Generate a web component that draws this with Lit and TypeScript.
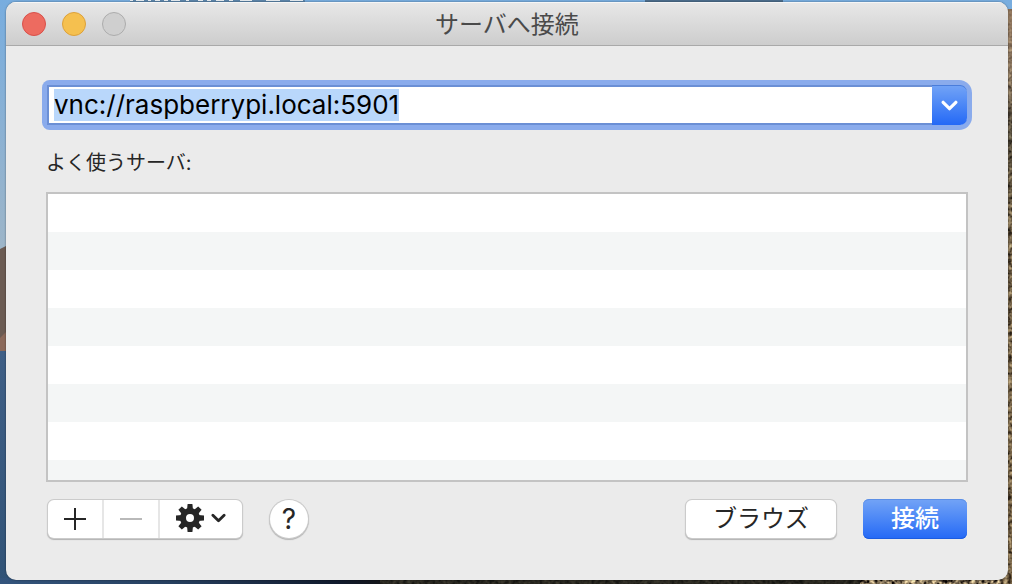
import { LitElement, html, css, svg } from "lit";
import { customElement, state, query } from "lit/decorators.js";

@customElement("app-root")
export class AppRoot extends LitElement {
  static styles = css`
    :host {
      display: block;
      color: #262626;
      font-family: "Inter", "Noto Sans CJK JP", sans-serif;
    }
    * {
      box-sizing: border-box;
    }
    button,
    input {
      font: inherit;
      color: inherit;
      margin: 0;
      padding: 0;
      border: 0;
      outline: 0;
      background: none;
    }
    svg {
      display: block;
    }
    .desktop {
      position: relative;
      display: flex;
      min-height: 100vh;
      padding: 2px 4px 4px 6px;
      overflow: hidden;
    }
    .wallpaper {
      position: absolute;
      inset: 0;
      width: 100%;
      height: 100%;
    }
    .window {
      position: relative;
      flex: 1;
      display: flex;
      flex-direction: column;
      border-radius: 10px;
      overflow: hidden;
      background: #ebebeb;
      box-shadow: 0 0 2px rgba(0, 0, 0, 0.5);
    }
    .titlebar {
      display: grid;
      grid-template-columns: 1fr auto 1fr;
      align-items: center;
      height: 44px;
      padding: 0 16px;
      border-bottom: 1px solid #a9a9a9;
      background: linear-gradient(#e8e8e8, #cdcdcd);
      box-shadow: inset 0 1px #f6f6f6;
    }
    .lights {
      display: flex;
      gap: 16px;
    }
    .light {
      width: 24px;
      height: 24px;
      border-radius: 50%;
      border: 1px solid;
    }
    .close {
      background: #ed6b60;
      border-color: #d8504a;
    }
    .minimize {
      background: #f5c04f;
      border-color: #dca03a;
    }
    .zoom {
      background: #cfcfcf;
      border-color: #acacac;
    }
    .title {
      margin: 0;
      padding-top: 2px;
      font-size: 24px;
      line-height: 32px;
      font-weight: 400;
      color: #4a4a4a;
    }
    .content {
      flex: 1;
      display: flex;
      flex-direction: column;
      padding: 39px 40px 41px;
    }
    .combo {
      display: flex;
      height: 40px;
      margin: 0 1px;
      border-radius: 3px 8px 8px 3px;
      background: #fff;
      box-shadow: 0 0 0 5px #8aabec;
    }
    .address {
      flex: 1;
      min-width: 0;
      padding: 0 5px;
      border: 2px solid #6b8fd5;
      border-right: 0;
      font-size: 26px;
      line-height: 32px;
      color: #000;
    }
    .address::selection {
      background: #b9d7fb;
      color: #000;
    }
    .drop {
      display: grid;
      place-items: center;
      width: 35px;
      border-radius: 0 7px 7px 0;
      color: #fff;
      background: linear-gradient(#73a4f6, #2469f6);
      box-shadow: inset 0 1px #4a7ddb;
    }
    .label {
      margin: 0;
      padding: 22px 0 13px;
      font-size: 20px;
      line-height: 32px;
      font-weight: 400;
    }
    .servers {
      flex: 1;
      margin: 0;
      padding: 0;
      list-style: none;
      border: 2px solid #c3c3c3;
      background: repeating-linear-gradient(#fff 0 38px, #f4f6f6 38px 76px);
    }
    .actions {
      display: flex;
      align-items: center;
      padding: 17px 1px 0 2px;
    }
    .raised {
      height: 38px;
      border-radius: 6px;
      background: #fff;
      box-shadow: 0 0 0 1px #cbcbcb, 0 1px 1px 1px #b2b2b2;
    }
    .segments {
      display: flex;
      margin-right: 28px;
    }
    .segment {
      display: flex;
      align-items: center;
      justify-content: center;
      gap: 7px;
      width: 56px;
      border-right: 2px solid #e6e6e6;
    }
    .segment:last-child {
      width: 82px;
      padding-bottom: 2px;
      border-right: 0;
    }
    .segment:disabled {
      color: #b9b9b9;
    }
    .help.raised {
      width: 38px;
      border-radius: 50%;
      font-size: 28px;
      line-height: 38px;
    }
    .spacer {
      flex: 1;
    }
    .push {
      width: 150px;
      font-size: 24px;
      line-height: 36px;
    }
    .connect {
      width: 104px;
      height: 40px;
      margin-left: 27px;
      border-radius: 6px;
      font-size: 24px;
      line-height: 36px;
      font-weight: 500;
      color: #fff;
      background: linear-gradient(#73a4f6, #2469f6);
      box-shadow: inset 0 1px #5c8fe6, inset 0 -1px #1c5ce0;
    }
  `;

  @state() private address = "vnc://raspberrypi.local:5901";
  @query(".address") private field!: HTMLInputElement;

  firstUpdated() {
    this.field.focus();
    this.field.select();
  }

  private chevron(w: number, h: number) {
    return html`<svg width=${w} height=${h} viewBox="0 0 16 10" aria-hidden="true">
      <path d="M2 2l6 6 6-6" fill="none" stroke="currentColor" stroke-width="3" stroke-linecap="round" stroke-linejoin="round" />
    </svg>`;
  }

  private gear() {
    const teeth = [0, 45, 90, 135, 180, 225, 270, 315];
    return html`<svg width="28" height="28" viewBox="-14 -14 28 28" fill="currentColor" aria-hidden="true">
      <circle r="7" fill="none" stroke="currentColor" stroke-width="6" />
      ${teeth.map((a) => svg`<path d="M-3 -8L-2.4 -14H2.4L3 -8Z" transform="rotate(${a})" />`)}
    </svg>`;
  }

  private wallpaper() {
    return html`<svg class="wallpaper" viewBox="0 0 1012 584" preserveAspectRatio="none" aria-hidden="true">
      <defs>
        <linearGradient id="sky" x2="0" y2="1">
          <stop offset="0" stop-color="#78addf" />
          <stop offset="1" stop-color="#9db5c8" />
        </linearGradient>
        <linearGradient id="sea" x2="0" y2="1">
          <stop offset="0" stop-color="#3f5f86" />
          <stop offset="1" stop-color="#315377" />
        </linearGradient>
        <linearGradient id="shore">
          <stop offset="0" stop-color="#34557d" />
          <stop offset="0.45" stop-color="#263f5f" />
          <stop offset="0.9" stop-color="#10192b" />
          <stop offset="1" stop-color="#14161a" />
        </linearGradient>
        <linearGradient id="cliff" x2="0" y2="1">
          <stop offset="0" stop-color="#92765d" stop-opacity="0.85" />
          <stop offset="0.1" stop-color="#8b7460" stop-opacity="0.6" />
          <stop offset="0.22" stop-color="#2c2a22" stop-opacity="0.6" />
          <stop offset="0.4" stop-color="#5a4a32" stop-opacity="0.4" />
          <stop offset="1" stop-color="#6b5434" stop-opacity="0.4" />
        </linearGradient>
        <filter id="grain" x="0" y="0" width="1" height="1" color-interpolation-filters="sRGB">
          <feTurbulence type="fractalNoise" baseFrequency="0.25" numOctaves="3" seed="4" />
          <feColorMatrix values="1.8 0 0 0 -0.38  1.65 0 0 0 -0.37  1.3 0 0 0 -0.3  0 0 0 0 1" />
        </filter>
      </defs>
      <rect width="1012" height="250" fill="url(#sky)" />
      <path d="M0 249L6 246V352H0Z" fill="#6b5b53" />
      <path d="M0 338L6 332V352H0Z" fill="#8b695a" />
      <rect y="351" width="20" height="233" fill="url(#sea)" />
      <rect y="578" width="380" height="6" fill="url(#shore)" />
      <rect x="380" y="578" width="632" height="6" filter="url(#grain)" />
      <rect x="380" y="578" width="480" height="6" fill="#171915" opacity="0.85" />
      <rect x="1002" y="9" width="10" height="575" filter="url(#grain)" />
      <rect x="1002" y="9" width="10" height="575" fill="url(#cliff)" />
      <rect x="645" width="138" height="2" fill="#4d6e8c" />
      <rect x="130" width="175" height="2" fill="#5d86ab" />
      <path d="M130 0h3v1h-3zM136 0h8v1h-8zM148 0h3v1h-3zM155 0h5v1h-5zM164 0h4v1h-4zM171 0h9v1h-9zM186 0h3v1h-3zM198 0h5v1h-5zM207 0h4v1h-4zM216 0h8v1h-8zM229 0h4v1h-4zM240 0h12v1h-12zM266 0h14v1h-14zM290 0h13v1h-13z" fill="#e8eef2" />
    </svg>`;
  }

  render() {
    return html`<div class="desktop">
      ${this.wallpaper()}
      <main class="window">
        <header class="titlebar">
          <div class="lights">
            <button class="light close" aria-label="閉じる"></button>
            <button class="light minimize" aria-label="しまう"></button>
            <button class="light zoom" aria-label="拡大" disabled></button>
          </div>
          <h1 class="title">サーバへ接続</h1>
        </header>
        <div class="content">
          <div class="combo">
            <input class="address" type="text" aria-label="サーバアドレス" spellcheck="false" .value=${this.address}
              @input=${(e: InputEvent) => (this.address = (e.target as HTMLInputElement).value)} />
            <button class="drop" aria-label="履歴">${this.chevron(17, 11)}</button>
          </div>
          <h2 class="label" id="favorites">よく使うサーバ:</h2>
          <ul class="servers" aria-labelledby="favorites"></ul>
          <footer class="actions">
            <div class="segments raised">
              <button class="segment" aria-label="追加">
                <svg width="22" height="22" viewBox="0 0 22 22" aria-hidden="true"><path d="M11 0v22M0 11h22" stroke="currentColor" stroke-width="2" /></svg>
              </button>
              <button class="segment" aria-label="削除" disabled>
                <svg width="22" height="22" viewBox="0 0 22 22" aria-hidden="true"><path d="M0 11h22" stroke="currentColor" stroke-width="2" /></svg>
              </button>
              <button class="segment" aria-label="アクション">${this.gear()}${this.chevron(15, 10)}</button>
            </div>
            <button class="help raised" aria-label="ヘルプ">?</button>
            <span class="spacer"></span>
            <button class="push raised">ブラウズ</button>
            <button class="connect">接続</button>
          </footer>
        </div>
      </main>
    </div>`;
  }
}
